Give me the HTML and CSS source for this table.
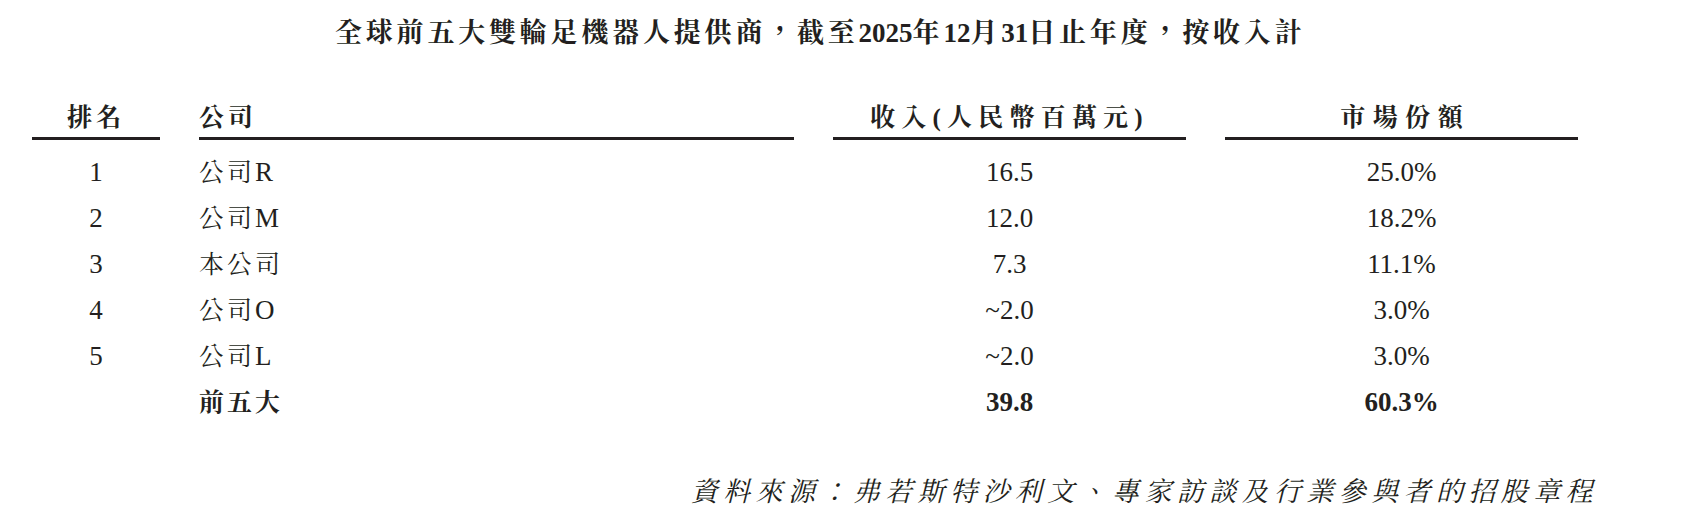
FILE: index.html
```html
<!DOCTYPE html>
<html lang="zh-Hant">
<head>
<meta charset="utf-8">
<title>全球前五大雙輪足機器人提供商</title>
<link rel="stylesheet" href="styles.css">
</head>
<body>
<div class="page">
  <h1 class="title">全球前五大雙輪足機器人提供商，截至<span class="num">2025</span>年<span class="num">12</span>月<span class="num">31</span>日止年度，按收入計</h1>
  <div class="table">
    <div class="hcell c-rank">排名</div>
    <div class="hcell c-co">公司</div>
    <div class="hcell c-rev wide">收入(人民幣百萬元)</div>
    <div class="hcell c-share wider">市場份額</div>

    <div class="cell c-rank">1</div>
    <div class="cell c-co"><span class="cjk">公司</span>R</div>
    <div class="cell c-rev">16.5</div>
    <div class="cell c-share">25.0%</div>

    <div class="cell c-rank">2</div>
    <div class="cell c-co"><span class="cjk">公司</span>M</div>
    <div class="cell c-rev">12.0</div>
    <div class="cell c-share">18.2%</div>

    <div class="cell c-rank">3</div>
    <div class="cell c-co"><span class="cjk">本公司</span></div>
    <div class="cell c-rev">7.3</div>
    <div class="cell c-share">11.1%</div>

    <div class="cell c-rank">4</div>
    <div class="cell c-co"><span class="cjk">公司</span>O</div>
    <div class="cell c-rev">~2.0</div>
    <div class="cell c-share">3.0%</div>

    <div class="cell c-rank">5</div>
    <div class="cell c-co"><span class="cjk">公司</span>L</div>
    <div class="cell c-rev">~2.0</div>
    <div class="cell c-share">3.0%</div>

    <div class="cell c-rank"></div>
    <div class="cell c-co total"><span class="cjk">前五大</span></div>
    <div class="cell c-rev total">39.8</div>
    <div class="cell c-share total">60.3%</div>
  </div>
  <p class="source">資料來源：弗若斯特沙利文、專家訪談及行業參與者的招股章程</p>
</div>
</body>
</html>
```

FILE: styles.css
```css
html, body {
  margin: 0;
  padding: 0;
  background: #ffffff;
}

.page {
  width: 1700px;
  height: 520px;
  color: #231f20;
  font-family: "Liberation Serif", "Noto Serif CJK TC", "Noto Sans CJK TC", serif;
  overflow: hidden;
}

.title {
  margin: 13px 0 0 0;
  padding-left: 335px;
  height: 40px;
  line-height: 40px;
  font-size: 27px;
  font-weight: 700;
  letter-spacing: 3.8px;
  white-space: nowrap;
}

.title .num {
  letter-spacing: 0;
}

.table {
  margin: 45px 0 0 32px;
  display: grid;
  grid-template-columns: 128px 595px 353px 353px;
  column-gap: 39px;
}

.hcell {
  height: 39px;
  line-height: 40px;
  border-bottom: 3px solid #231f20;
  font-size: 25px;
  font-weight: 700;
  letter-spacing: 4px;
  white-space: nowrap;
  margin-bottom: 9px;
}

.hcell.wide {
  letter-spacing: 6.2px;
}

.hcell.wider {
  letter-spacing: 7.5px;
  text-indent: 7.5px;
}

.cell {
  height: 46px;
  line-height: 46px;
  font-size: 27px;
  white-space: nowrap;
}

.cell .cjk {
  font-size: 25px;
  letter-spacing: 3px;
}

.c-rank, .c-rev, .c-share {
  text-align: center;
}

.c-co {
  text-align: left;
}

.total {
  font-weight: 700;
}

.source {
  margin: 47px 0 0 0;
  padding-right: 102px;
  text-align: right;
  height: 40px;
  line-height: 40px;
  font-size: 27px;
  font-style: italic;
  letter-spacing: 5.4px;
  white-space: nowrap;
}
```
